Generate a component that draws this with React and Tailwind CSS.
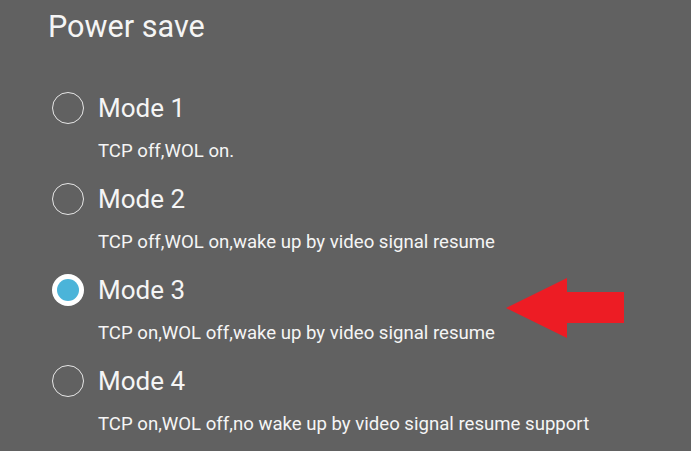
import React from 'react';

const modes = [
  { name: 'Mode 1', desc: 'TCP off,WOL on.' },
  { name: 'Mode 2', desc: 'TCP off,WOL on,wake up by video signal resume' },
  { name: 'Mode 3', desc: 'TCP on,WOL off,wake up by video signal resume', selected: true },
  { name: 'Mode 4', desc: 'TCP on,WOL off,no wake up by video signal resume support' },
];

const Radio = ({ selected }) =>
  selected ? (
    <div className="w-[32px] h-[32px] rounded-full bg-white flex items-center justify-center">
      <div className="w-[22px] h-[22px] rounded-full bg-[#4bb4d9]" />
    </div>
  ) : (
    <div className="w-[32px] h-[32px] rounded-full border-[1.5px] border-[#e6e6e6]" />
  );

const Arrow = () => (
  <svg className="absolute left-[506px] top-[278px]" width="120" height="62" viewBox="0 0 120 62">
    <polygon points="0,30 61,0 61,14 118,14 118,45 61,45 61,60" fill="#ed1c24" />
  </svg>
);

export default function App() {
  return (
    <div
      className="relative w-[691px] h-[451px] bg-[#616161] text-[#f5f5f5] overflow-hidden"
      style={{ fontFamily: 'Roboto, "Liberation Sans", sans-serif' }}
    >
      <div className="pl-[48px] pt-[9px] h-[36px] box-content text-[30.6px] leading-[36px]">Power save</div>
      <div className="pt-[47px] pl-[52px]">
        {modes.map(m => (
          <div key={m.name} className="h-[91px]">
            <div className="flex items-center h-[32px] gap-[14px]">
              <Radio selected={m.selected} />
              <span className="text-[26px] leading-[32px]">{m.name}</span>
            </div>
            <div className="mt-[15px] pl-[46px] text-[18.6px] leading-[24px]">{m.desc}</div>
          </div>
        ))}
      </div>
      <Arrow />
    </div>
  );
}
